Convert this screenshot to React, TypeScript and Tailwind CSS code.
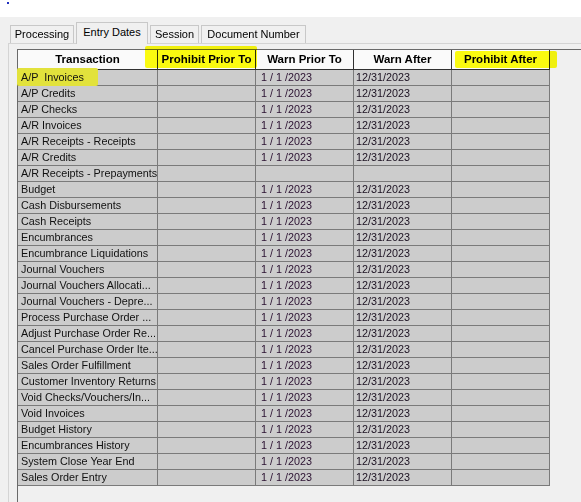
import React from 'react';

type Row = { name: string; prior?: string; after?: string };

const rows: Row[] = [
  { name: 'A/P  Invoices', prior: '1 / 1 /2023', after: '12/31/2023' },
  { name: 'A/P Credits', prior: '1 / 1 /2023', after: '12/31/2023' },
  { name: 'A/P Checks', prior: '1 / 1 /2023', after: '12/31/2023' },
  { name: 'A/R Invoices', prior: '1 / 1 /2023', after: '12/31/2023' },
  { name: 'A/R Receipts - Receipts', prior: '1 / 1 /2023', after: '12/31/2023' },
  { name: 'A/R Credits', prior: '1 / 1 /2023', after: '12/31/2023' },
  { name: 'A/R Receipts - Prepayments' },
  { name: 'Budget', prior: '1 / 1 /2023', after: '12/31/2023' },
  { name: 'Cash Disbursements', prior: '1 / 1 /2023', after: '12/31/2023' },
  { name: 'Cash Receipts', prior: '1 / 1 /2023', after: '12/31/2023' },
  { name: 'Encumbrances', prior: '1 / 1 /2023', after: '12/31/2023' },
  { name: 'Encumbrance Liquidations', prior: '1 / 1 /2023', after: '12/31/2023' },
  { name: 'Journal Vouchers', prior: '1 / 1 /2023', after: '12/31/2023' },
  { name: 'Journal Vouchers Allocati...', prior: '1 / 1 /2023', after: '12/31/2023' },
  { name: 'Journal Vouchers - Depre...', prior: '1 / 1 /2023', after: '12/31/2023' },
  { name: 'Process Purchase Order ...', prior: '1 / 1 /2023', after: '12/31/2023' },
  { name: 'Adjust Purchase Order Re...', prior: '1 / 1 /2023', after: '12/31/2023' },
  { name: 'Cancel Purchase Order Ite...', prior: '1 / 1 /2023', after: '12/31/2023' },
  { name: 'Sales Order Fulfillment', prior: '1 / 1 /2023', after: '12/31/2023' },
  { name: 'Customer Inventory Returns', prior: '1 / 1 /2023', after: '12/31/2023' },
  { name: 'Void Checks/Vouchers/In...', prior: '1 / 1 /2023', after: '12/31/2023' },
  { name: 'Void Invoices', prior: '1 / 1 /2023', after: '12/31/2023' },
  { name: 'Budget History', prior: '1 / 1 /2023', after: '12/31/2023' },
  { name: 'Encumbrances History', prior: '1 / 1 /2023', after: '12/31/2023' },
  { name: 'System Close Year End', prior: '1 / 1 /2023', after: '12/31/2023' },
  { name: 'Sales Order Entry', prior: '1 / 1 /2023', after: '12/31/2023' },
];

const tabs = [
  { label: 'Processing', w: 'w-[64px]' },
  { label: 'Entry Dates', w: 'w-[72px]' },
  { label: 'Session', w: 'w-[49px]' },
  { label: 'Document Number', w: 'w-[105px]' },
];

const App: React.FC = () => {
  return (
    <div
      className="relative w-[581px] h-[502px] overflow-hidden bg-[#f0f0f0] text-black"
      style={{ fontFamily: '"Liberation Sans", Arial, sans-serif' }}
    >
      {/* top strip */}
      <div className="relative h-[17px] bg-white">
        <span className="absolute left-[7px] top-[2px] w-[2px] h-[2px] bg-[#2030c0]"></span>
      </div>

      {/* Tabs */}
      <div className="pl-[10px] pt-[5px] flex items-end h-[26px] gap-[2px]">
        {tabs.map((t) => {
          const active = t.label === 'Entry Dates';
          return (
            <div
              key={t.label}
              className={
                active
                  ? `relative z-10 ${t.w} h-[22px] -mb-[1px] bg-[#f0f0f0] border border-b-0 border-[#c8c8c8] text-[11px] leading-[19px] text-center whitespace-nowrap`
                  : `${t.w} h-[18px] bg-[#f0f0f0] border border-b-0 border-[#c8c8c8] text-[11px] leading-[16px] text-center whitespace-nowrap`
              }
            >
              {t.label}
            </div>
          );
        })}
      </div>

      {/* Panel */}
      <div className="ml-[8px] border-t border-l border-[#d4d4d4] h-[500px] pt-[5px] pl-[8px]">
        <div className="border-t border-l border-[#6a6a6a] h-[500px] bg-[#f0f0f0]">
          {/* header */}
          <div className="flex text-[11.5px] font-bold leading-[19px]">
            <div className="w-[140px] h-[20px] bg-[#fafafa] border-r border-b border-[#303030] text-center">Transaction</div>
            <div className="w-[98px] h-[20px] bg-[#fafafa] border-r border-b border-[#303030] text-center">Prohibit Prior To</div>
            <div className="w-[98px] h-[20px] bg-[#fafafa] border-r border-b border-[#303030] text-center">Warn Prior To</div>
            <div className="w-[98px] h-[20px] bg-[#fafafa] border-r border-b border-[#303030] text-center">Warn After</div>
            <div className="w-[98px] h-[20px] bg-[#fafafa] border-r border-b border-[#303030] text-center">Prohibit After</div>
          </div>
          {/* body */}
          {rows.map((r, i) => (
            <div key={r.name} className="flex text-[10.8px] leading-[15px] text-[#111]">
              <div className="relative w-[140px] h-[16px] bg-[#cccccc] border-r border-b border-[#7a7a7a] pl-[3px] whitespace-pre">
                {i === 0 && (
                  <span className="absolute -left-[1px] -top-[2px] w-[81px] h-[18px] bg-[#e2e23c] rounded-[2px]"></span>
                )}
                <span className="relative">{r.name}</span>
              </div>
              <div className="w-[98px] h-[16px] bg-[#cccccc] border-r border-b border-[#7a7a7a]"></div>
              <div className="w-[98px] h-[16px] bg-[#cccccc] border-r border-b border-[#7a7a7a] pl-[5px] text-[#2a1030]">{r.prior}</div>
              <div className="w-[98px] h-[16px] bg-[#cccccc] border-r border-b border-[#7a7a7a] pl-[2px] text-[#1a1020]">{r.after}</div>
              <div className="w-[98px] h-[16px] bg-[#cccccc] border-r border-b border-[#7a7a7a]"></div>
            </div>
          ))}
        </div>
      </div>

      {/* highlighter marks on header */}
      <span className="absolute left-[145px] top-[46px] w-[112px] h-[22px] bg-[#ffff10] mix-blend-multiply rounded-[2px]"></span>
      <span className="absolute left-[455px] top-[51px] w-[102px] h-[17px] bg-[#ffff10] mix-blend-multiply rounded-[2px]"></span>
    </div>
  );
};

export default App;
